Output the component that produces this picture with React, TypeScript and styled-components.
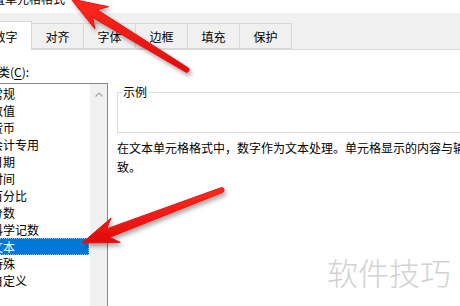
import styled, { createGlobalStyle } from "styled-components";

const GlobalStyle = createGlobalStyle`
  html, body {
    margin: 0;
    padding: 0;
    background: #ffffff;
  }
  #root {
    width: 460px;
    height: 306px;
    overflow: hidden;
    position: relative;
    font-family: "Noto Sans CJK SC", "Noto Sans", sans-serif;
    font-size: 12px;
    color: #000;
  }
`;

const Page = styled.div`
  width: 460px;
  height: 306px;
  display: flex;
  flex-direction: column;
  background: #ffffff;
`;

const TitleBar = styled.div`
  height: 13px;
  overflow: hidden;
  flex-shrink: 0;
`;

const TitleText = styled.div`
  margin: -9px 0 0 -19px;
  line-height: 16px;
  white-space: nowrap;
`;

const TabStrip = styled.div`
  height: 36px;
  flex-shrink: 0;
  display: flex;
  align-items: flex-end;
  background: #f0f0f0;
  border-bottom: 1px solid #d9d9d9;
  padding-left: 0;
  margin-left: -21px;
`;

const Tab = styled.div<{ $active?: boolean }>`
  box-sizing: border-box;
  width: 53px;
  height: ${(p) => (p.$active ? "29px" : "26px")};
  margin-bottom: ${(p) => (p.$active ? "-1px" : "0")};
  display: flex;
  align-items: center;
  justify-content: center;
  padding-top: ${(p) => (p.$active ? "0" : "1px")};
  background: ${(p) => (p.$active ? "#ffffff" : "#f0f0f0")};
  border: 1px solid #d9d9d9;
  border-bottom: ${(p) => (p.$active ? "none" : "1px solid #d9d9d9")};
  margin-right: -1px;
  white-space: nowrap;
  position: relative;
  z-index: ${(p) => (p.$active ? 1 : 0)};
`;

const Body = styled.div`
  flex: 1;
  display: flex;
  min-height: 0;
`;

const LeftColumn = styled.div`
  width: 122px;
  flex-shrink: 0;
  margin-left: -14px;
  display: flex;
  flex-direction: column;
`;

const Label = styled.div`
  margin-top: 14px;
  line-height: 16px;
  white-space: nowrap;

  u {
    text-decoration: underline;
    text-underline-offset: 2px;
  }
`;

const ListBox = styled.div`
  margin: 3px 0 0 1px;
  flex: 1;
  display: flex;
  border: 1px solid #828790;
  border-bottom: none;
`;

const Items = styled.div`
  flex: 1;
  padding-top: 1px;
  display: flex;
  flex-direction: column;
`;

const Item = styled.div<{ $selected?: boolean }>`
  box-sizing: border-box;
  height: 17px;
  line-height: 15px;
  padding-left: 2px;
  white-space: nowrap;
  background: ${(p) => (p.$selected ? "#0078d7" : "transparent")};
  color: ${(p) => (p.$selected ? "#ffffff" : "#000000")};
  border: 1px dotted ${(p) => (p.$selected ? "#8fc3ee" : "transparent")};
  margin-right: 1px;
`;

const ScrollBar = styled.div`
  width: 17px;
  flex-shrink: 0;
  background: #f0f0f0;
  display: flex;
  justify-content: center;
  padding-top: 8px;
  box-sizing: border-box;
`;

const RightColumn = styled.div`
  margin-left: 9px;
  display: flex;
  flex-direction: column;
`;

const Sample = styled.fieldset`
  box-sizing: border-box;
  width: 400px;
  height: 49px;
  margin: 34px 0 0 0;
  padding: 0 0 0 4px;
  border: 1px solid #dcdcdc;

  legend {
    padding: 0 1px;
    line-height: 16px;
  }
`;

const Description = styled.p`
  width: 438px;
  margin: 5px 0 0 0;
  line-height: 19px;
`;

const Watermark = styled.div`
  position: absolute;
  left: 327px;
  top: 255px;
  font-size: 31px;
  line-height: 34px;
  color: #d2d2d2;
  font-weight: 300;
  white-space: nowrap;
`;

const Overlay = styled.svg`
  position: absolute;
  left: 0;
  top: 0;
  pointer-events: none;
`;

const tabs = ["数字", "对齐", "字体", "边框", "填充", "保护"];
const categories = [
  "常规",
  "数值",
  "货币",
  "会计专用",
  "日期",
  "时间",
  "百分比",
  "分数",
  "科学记数",
  "文本",
  "特殊",
  "自定义",
];

function Arrows() {
  return (
    <Overlay width="460" height="306" viewBox="0 0 460 306">
      <defs>
        <filter id="shadow" x="-20%" y="-20%" width="140%" height="140%">
          <feDropShadow dx="2" dy="3" stdDeviation="2" floodColor="#000" floodOpacity="0.35" />
        </filter>
        <linearGradient id="red" x1="0" y1="0" x2="0" y2="1">
          <stop offset="0" stopColor="#ff2a1e" />
          <stop offset="1" stopColor="#e00c0c" />
        </linearGradient>
      </defs>
      <g filter="url(#shadow)" fill="url(#red)" stroke="#e81212" strokeWidth="1" strokeLinejoin="round">
        <path d="M71 -1 L108.5 6.7 L97.2 9.8 L188.3 67.9 A2.5 2.5 0 0 1 185.7 72.1 L92.6 17.4 L94.9 28.9 Z" />
        <path d="M82 243 L111.1 218.1 L106.6 228.9 L221.1 187.7 A2.5 2.5 0 0 1 222.9 192.3 L109.8 237.3 L120.3 242.5 Z" />
      </g>
    </Overlay>
  );
}

export default function App() {
  return (
    <>
      <GlobalStyle />
      <Page>
        <TitleBar>
          <TitleText>设置单元格格式</TitleText>
        </TitleBar>
        <TabStrip>
          {tabs.map((t, i) => (
            <Tab key={t} $active={i === 0}>
              {t}
            </Tab>
          ))}
        </TabStrip>
        <Body>
          <LeftColumn>
            <Label>
              分类(<u>C</u>):
            </Label>
            <ListBox>
              <Items>
                {categories.map((c) => (
                  <Item key={c} $selected={c === "文本"}>
                    {c}
                  </Item>
                ))}
              </Items>
              <ScrollBar>
                <svg width="8" height="5" viewBox="0 0 8 5">
                  <path d="M0.5 4.5 L4 1 L7.5 4.5" fill="none" stroke="#a6a6a6" strokeWidth="1.2" />
                </svg>
              </ScrollBar>
            </ListBox>
          </LeftColumn>
          <RightColumn>
            <Sample>
              <legend>示例</legend>
            </Sample>
            <Description>
              在文本单元格格式中，数字作为文本处理。单元格显示的内容与输入的内容完全一致。
            </Description>
          </RightColumn>
        </Body>
      </Page>
      <Watermark>软件技巧</Watermark>
      <Arrows />
    </>
  );
}
